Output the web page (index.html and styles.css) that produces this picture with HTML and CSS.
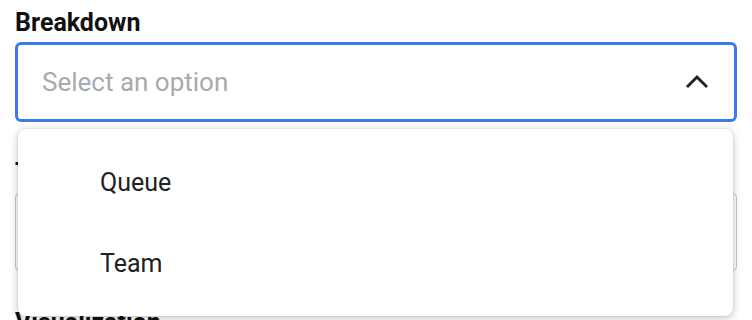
FILE: index.html
```html
<!DOCTYPE html>
<html>
<head>
<meta charset="utf-8">
<link rel="stylesheet" href="styles.css">
</head>
<body>
<div class="form">
  <div class="field">
    <div class="label">Breakdown</div>
    <div class="select-wrap">
      <div class="select open">
        <span class="placeholder">Select an option</span>
        <svg class="chevron" width="22" height="16" viewBox="0 0 22 16"><path d="M2 13 L11 4 L20 13" fill="none" stroke="#202124" stroke-width="3" stroke-linecap="square"/></svg>
      </div>
      <div class="menu">
        <div class="item">Queue</div>
        <div class="item">Team</div>
      </div>
    </div>
  </div>
  <div class="field">
    <div class="label">Time range</div>
    <div class="select-wrap">
      <div class="select">
        <span class="placeholder">Select an option</span>
      </div>
    </div>
  </div>
  <div class="field">
    <div class="label">Visualization</div>
  </div>
</div>
</body>
</html>
```
FILE: styles.css
```css
html, body {
  margin: 0;
  padding: 0;
  background: #ffffff;
  font-family: Roboto, "Liberation Sans", sans-serif;
  overflow: hidden;
}
.form {
  padding: 8px 15px 0 15px;
  display: flex;
  flex-direction: column;
  gap: 36px;
}
.field {
  display: flex;
  flex-direction: column;
  gap: 4px;
}
.label {
  font-size: 25px;
  line-height: 30px;
  font-weight: 700;
  color: #111111;
}
.select-wrap {
  position: relative;
}
.select {
  height: 80px;
  box-sizing: border-box;
  border: 1.5px solid #c4c7cb;
  border-radius: 6px;
  display: flex;
  align-items: center;
  padding: 0 26px 0 25px;
  justify-content: space-between;
}
.select.open {
  border: 3px solid #3b7ae8;
  padding-left: 24px;
}
.placeholder {
  font-size: 26px;
  color: #a6aaaf;
}
.chevron {
  display: block;
  margin-right: 0;
  margin-top: -2px;
}
.menu {
  position: absolute;
  top: 87px;
  left: 3px;
  right: 4px;
  height: 187px;
  box-sizing: border-box;
  background: #fff;
  border-radius: 8px;
  box-shadow: 0 2px 9px rgba(0,0,0,0.24), 0 0 2px rgba(0,0,0,0.12);
  padding: 13px 0;
  z-index: 5;
}
.item {
  height: 81px;
  display: flex;
  align-items: center;
  padding-left: 82px;
  font-size: 25px;
  color: #202124;
}
```
